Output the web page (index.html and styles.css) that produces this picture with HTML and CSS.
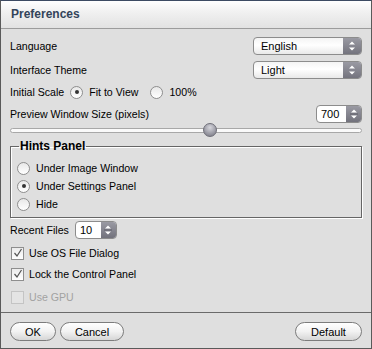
FILE: index.html
```html
<!DOCTYPE html>
<html lang="en">
  <head>
    <meta charset="UTF-8" />
    <title>Preferences</title>
    <link rel="stylesheet" href="styles.css">
  </head>
  <body>
    <div class="window">
      <div class="titlebar">Preferences</div>

      <div class="content">
        <div class="row row_lang">
          <span class="label">Language</span>
          <div class="select">
            <span class="select_text">English</span>
            <span class="select_arrow">
              <svg width="8" height="10" viewBox="0 0 8 10"><path d="M4 0.5 L7 3.5 H1 Z M4 9.5 L7 6.5 H1 Z" fill="#fff"/></svg>
            </span>
          </div>
        </div>

        <div class="row row_theme">
          <span class="label">Interface Theme</span>
          <div class="select">
            <span class="select_text">Light</span>
            <span class="select_arrow">
              <svg width="8" height="10" viewBox="0 0 8 10"><path d="M4 0.5 L7 3.5 H1 Z M4 9.5 L7 6.5 H1 Z" fill="#fff"/></svg>
            </span>
          </div>
        </div>

        <div class="row row_scale">
          <span class="label">Initial Scale</span>
          <span class="radio checked"></span>
          <span class="radio_text">Fit to View</span>
          <span class="radio radio_second"></span>
          <span class="radio_text">100%</span>
        </div>

        <div class="row row_preview">
          <span class="label">Preview Window Size (pixels)</span>
          <div class="spin spin_wide">
            <span class="spin_text">700</span>
            <span class="spin_arrow">
              <svg width="8" height="14" viewBox="0 0 8 14"><path d="M4 2.5 L7 5.5 H1 Z M4 11.5 L7 8.5 H1 Z" fill="#fff"/><path d="M0 7 H8" stroke="#5e5e68" stroke-width="1"/></svg>
            </span>
          </div>
        </div>

        <div class="slider">
          <div class="track"></div>
          <div class="thumb"></div>
        </div>

        <fieldset class="hints">
          <legend>Hints Panel</legend>
          <div class="hint_row"><span class="radio"></span><span class="radio_text">Under Image Window</span></div>
          <div class="hint_row"><span class="radio checked"></span><span class="radio_text">Under Settings Panel</span></div>
          <div class="hint_row"><span class="radio"></span><span class="radio_text">Hide</span></div>
        </fieldset>

        <div class="row row_recent">
          <span class="label">Recent Files</span>
          <div class="spin spin_small">
            <span class="spin_text">10</span>
            <span class="spin_arrow">
              <svg width="8" height="14" viewBox="0 0 8 14"><path d="M4 2.5 L7 5.5 H1 Z M4 11.5 L7 8.5 H1 Z" fill="#fff"/><path d="M0 7 H8" stroke="#5e5e68" stroke-width="1"/></svg>
            </span>
          </div>
        </div>

        <div class="row check_row row_os">
          <span class="check"><svg width="10" height="10" viewBox="0 0 10 10"><path d="M1.5 5 L4 8 L8.5 1" fill="none" stroke="#555" stroke-width="1.2"/></svg></span>
          <span class="check_text">Use OS File Dialog</span>
        </div>
        <div class="row check_row row_lock">
          <span class="check"><svg width="10" height="10" viewBox="0 0 10 10"><path d="M1.5 5 L4 8 L8.5 1" fill="none" stroke="#555" stroke-width="1.2"/></svg></span>
          <span class="check_text">Lock the Control Panel</span>
        </div>
        <div class="row check_row row_gpu disabled">
          <span class="check"></span>
          <span class="check_text">Use GPU</span>
        </div>
      </div>

      <div class="footer">
        <button class="btn btn_ok">OK</button>
        <button class="btn btn_cancel">Cancel</button>
        <button class="btn btn_default">Default</button>
      </div>
    </div>
  </body>
</html>
```

FILE: styles.css
```css
body {
  margin: 0;
  padding: 0;
  background-color: #dfdfdf;
  font-family: "Liberation Sans", Arial, sans-serif;
  font-size: 10.6px;
  color: #000;
}

.window {
  width: 370px;
  height: 347px;
  border-top: 1px solid #3d4b63;
  border-left: 1px solid #5a5a5a;
  border-right: 1px solid #5a5a5a;
  border-bottom: 1px solid #5a5a5a;
  background-color: #dfdfdf;
  display: flex;
  flex-direction: column;
}

.titlebar {
  height: 27px;
  padding-left: 10px;
  line-height: 27px;
  font-size: 12px;
  font-weight: bold;
  color: #33445a;
  background: linear-gradient(#ffffff, #f1f1f1 40%, #e2e2e2);
  border-bottom: 1px solid #9c9c9c;
}

.content {
  flex: 1;
  padding: 0 9px;
  display: flex;
  flex-direction: column;
}

.row {
  display: flex;
  align-items: center;
  height: 18px;
}

.row_lang {
  margin-top: 8px;
}
.row_theme {
  margin-top: 6px;
}
.row_scale {
  margin-top: 4px;
}
.row_preview {
  margin-top: 4px;
}
.row_recent {
  margin-top: 3px;
}

.label {
  flex: 0 0 auto;
}

.select {
  margin-left: auto;
  width: 107px;
  height: 16px;
  border: 1px solid #8c8c8c;
  border-radius: 4px;
  background: linear-gradient(#f4f4f4, #ffffff 45%, #e9e9e9);
  display: flex;
  overflow: hidden;
}

.select_text {
  flex: 1;
  padding-left: 7px;
  line-height: 16px;
  font-size: 11px;
}

.select_arrow {
  width: 18px;
  background: linear-gradient(#9a9aa3, #74747e);
  display: flex;
  align-items: center;
  justify-content: center;
}

.radio {
  width: 11px;
  height: 11px;
  border: 1px solid #8e8e8e;
  border-radius: 50%;
  background: linear-gradient(#e8e8e8, #ffffff);
  display: inline-flex;
  align-items: center;
  justify-content: center;
  flex: 0 0 auto;
}

.radio.checked::after {
  content: "";
  width: 4px;
  height: 4px;
  border-radius: 50%;
  background-color: #333;
}

.row_scale .radio {
  margin-left: 6px;
}
.row_scale .radio_second {
  margin-left: 12px;
}

.radio_text {
  margin-left: 6px;
}

.spin {
  height: 16px;
  border: 1px solid #8c8c8c;
  border-radius: 4px;
  background-color: #fff;
  display: flex;
  overflow: hidden;
}

.spin_wide {
  margin-left: auto;
  width: 44px;
}

.spin_small {
  margin-left: 6px;
  width: 40px;
}

.spin_text {
  flex: 1;
  padding-left: 4px;
  line-height: 16px;
  font-size: 11px;
}

.spin_arrow {
  width: 15px;
  background: linear-gradient(#9a9aa3, #72727c);
  display: flex;
  align-items: center;
  justify-content: center;
}

.slider {
  position: relative;
  height: 14px;
  display: flex;
  align-items: center;
}

.track {
  width: 100%;
  height: 3px;
  border: 1px solid #a8a8a8;
  border-radius: 3px;
  background-color: #fafafa;
}

.thumb {
  position: absolute;
  left: 193px;
  top: 0;
  width: 14px;
  height: 14px;
  border-radius: 50%;
  border: 1px solid #6e6e78;
  box-sizing: border-box;
  background: radial-gradient(circle at 50% 30%, #d6d6dc, #9a9aa4 60%, #73737d);
}

.hints {
  margin: 2px 0 0 0;
  padding: 6px 6px 4px 6px;
  border: 1px solid #666;
  box-shadow: inset 1px 1px 0 #fff, 1px 1px 0 #fff;
}

.hints legend {
  font-weight: bold;
  font-size: 12px;
  line-height: 14px;
  padding: 0 1px;
  margin-left: 2px;
}

.hint_row {
  display: flex;
  align-items: center;
  height: 18px;
}

.check_row {
  height: 20px;
}

.row_os {
  margin-top: 4px;
}
.row_lock {
  margin-top: 1px;
}
.row_gpu {
  margin-top: 3px;
}

.check {
  width: 11px;
  height: 11px;
  border: 1px solid #8e8e8e;
  background: linear-gradient(#ececec, #ffffff);
  display: inline-flex;
  align-items: center;
  justify-content: center;
  margin-left: 1px;
}

.check_text {
  margin-left: 5px;
}

.disabled .check {
  border-color: #c4c4c4;
  background: #e4e4e4;
}

.disabled .check_text {
  color: #a2a2a2;
}

.footer {
  height: 36px;
  border-top: 1px solid #6a6a6a;
  padding: 9px 9px 0 9px;
  box-sizing: border-box;
  display: flex;
  align-items: flex-start;
}

.btn {
  height: 19px;
  border: 1px solid #7c7c7c;
  border-radius: 10px;
  background: linear-gradient(#ffffff, #f2f2f2 50%, #d6d6d6);
  font-family: "Liberation Sans", Arial, sans-serif;
  font-size: 11px;
  color: #000;
  padding: 0;
}

.btn_ok {
  width: 46px;
}

.btn_cancel {
  width: 64px;
  margin-left: 4px;
}

.btn_default {
  width: 67px;
  margin-left: auto;
}
```
